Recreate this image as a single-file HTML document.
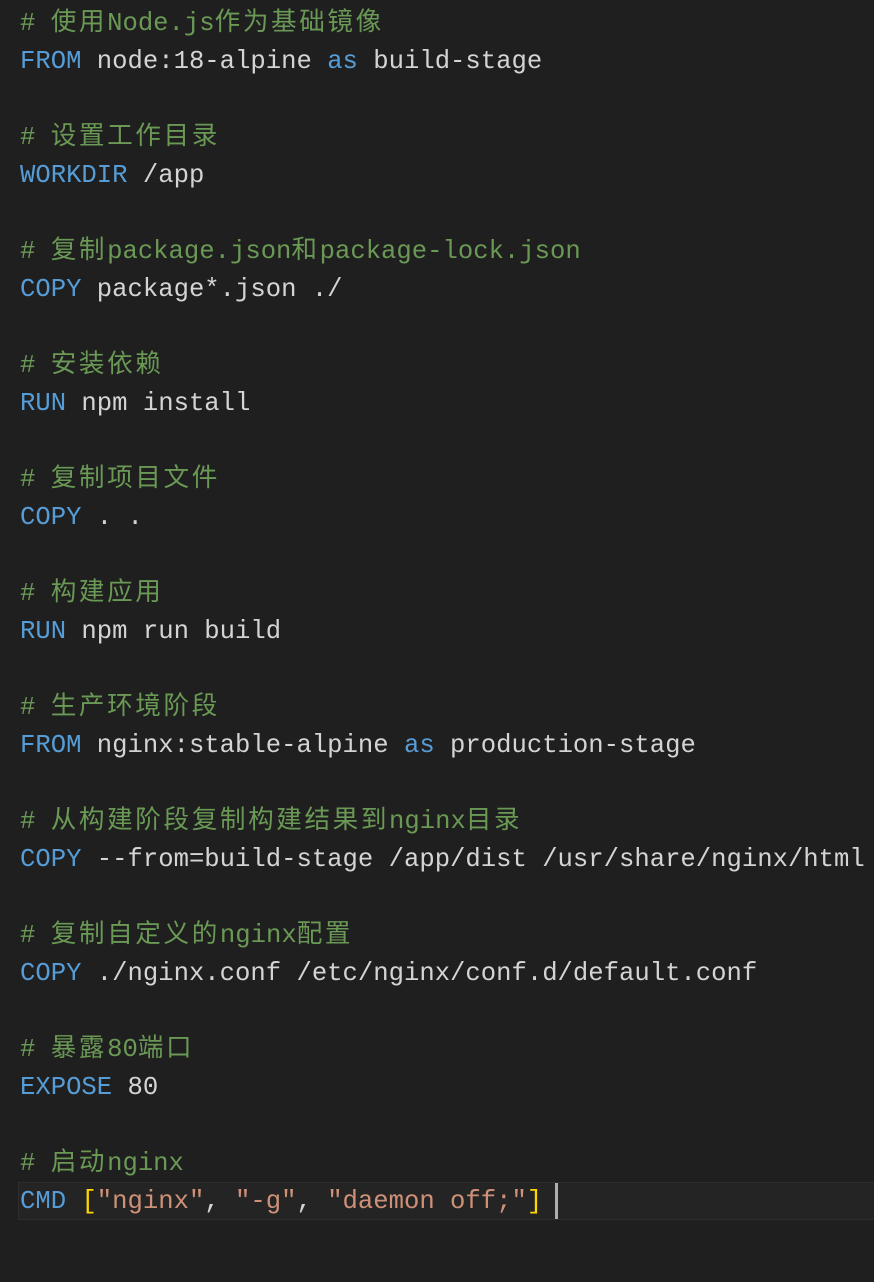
<!DOCTYPE html>
<html><head><meta charset="utf-8"><style>
html,body{margin:0;padding:0;background:#1f1f1f;width:874px;height:1282px;overflow:hidden}
pre{margin:0;padding:5px 0 0 20px;font-family:"Liberation Mono","Noto Sans CJK SC",monospace;font-size:25.6px;line-height:38px;color:#d4d4d4;white-space:pre;position:relative}
.m{color:#6a9955}.k{color:#569cd6}.s{color:#ce9178}.b{color:#ffd700}
.z{letter-spacing:2.6px}
.hl{position:absolute;left:18px;right:-2px;top:1182px;height:36px;border:1px solid #2e2e2e;background:#242424}
.cur{position:absolute;left:555px;top:1183px;width:3px;height:36px;background:#aeafad}
</style></head><body>
<div class="hl"></div>
<pre><span class="m"># <span class="z">使用</span>Node.js<span class="z">作为基础镜像</span></span>
<span class="k">FROM</span> node:18-alpine <span class="k">as</span> build-stage

<span class="m"># <span class="z">设置工作目录</span></span>
<span class="k">WORKDIR</span> /app

<span class="m"># <span class="z">复制</span>package.json<span class="z">和</span>package-lock.json</span>
<span class="k">COPY</span> package*.json ./

<span class="m"># <span class="z">安装依赖</span></span>
<span class="k">RUN</span> npm install

<span class="m"># <span class="z">复制项目文件</span></span>
<span class="k">COPY</span> . .

<span class="m"># <span class="z">构建应用</span></span>
<span class="k">RUN</span> npm run build

<span class="m"># <span class="z">生产环境阶段</span></span>
<span class="k">FROM</span> nginx:stable-alpine <span class="k">as</span> production-stage

<span class="m"># <span class="z">从构建阶段复制构建结果到</span>nginx<span class="z">目录</span></span>
<span class="k">COPY</span> --from=build-stage /app/dist /usr/share/nginx/html

<span class="m"># <span class="z">复制自定义的</span>nginx<span class="z">配置</span></span>
<span class="k">COPY</span> ./nginx.conf /etc/nginx/conf.d/default.conf

<span class="m"># <span class="z">暴露</span>80<span class="z">端口</span></span>
<span class="k">EXPOSE</span> 80

<span class="m"># <span class="z">启动</span>nginx</span>
<span class="k">CMD</span> <span class="b">[</span><span class="s">"nginx"</span>, <span class="s">"-g"</span>, <span class="s">"daemon off;"</span><span class="b">]</span></pre>
<div class="cur"></div>
</body></html>
